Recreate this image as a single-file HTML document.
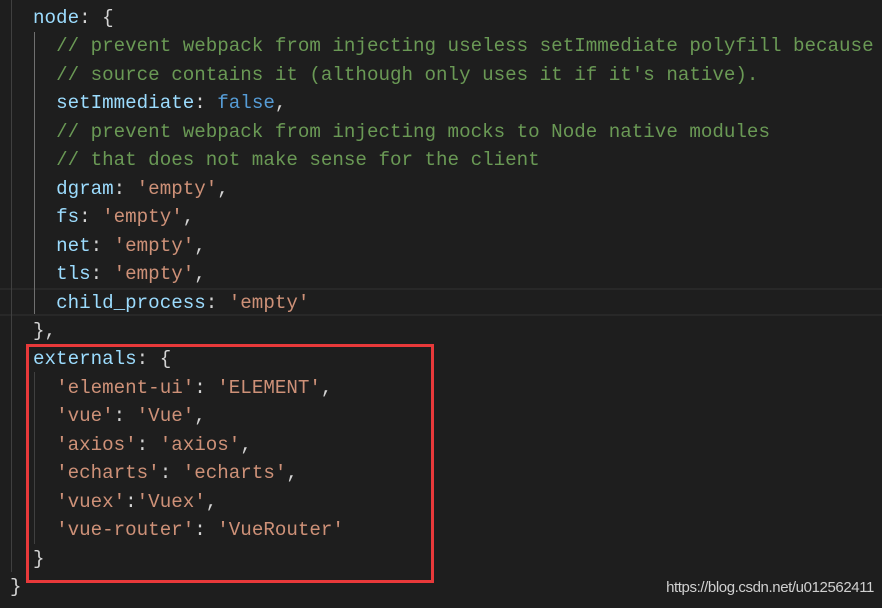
<!DOCTYPE html>
<html><head><style>
body{margin:0;background:#1e1e1e;width:882px;height:608px;overflow:hidden;position:relative}
pre{margin:0;position:absolute;left:10px;top:4px;font-family:"Liberation Mono",monospace;font-size:19.2px;line-height:28.45px;color:#d4d4d4}
.k{color:#9cdcfe}.c{color:#6a9955}.s{color:#ce9178}.b{color:#569cd6}
.g{position:absolute;width:1px;background:#404040}
</style></head><body>
<div style="position:absolute;left:0;top:288px;width:882px;height:28px;border-top:2px solid #282828;border-bottom:2px solid #282828;box-sizing:border-box"></div>
<div class="g" style="left:11px;top:0;height:572px"></div>
<div class="g" style="left:34px;top:32px;height:282px;background:#707070"></div>
<div class="g" style="left:34px;top:372px;height:172px"></div>
<pre>  <span class="k">node</span>: {
    <span class="c">// prevent webpack from injecting useless setImmediate polyfill because</span>
    <span class="c">// source contains it (although only uses it if it's native).</span>
    <span class="k">setImmediate</span>: <span class="b">false</span>,
    <span class="c">// prevent webpack from injecting mocks to Node native modules</span>
    <span class="c">// that does not make sense for the client</span>
    <span class="k">dgram</span>: <span class="s">'empty'</span>,
    <span class="k">fs</span>: <span class="s">'empty'</span>,
    <span class="k">net</span>: <span class="s">'empty'</span>,
    <span class="k">tls</span>: <span class="s">'empty'</span>,
    <span class="k">child_process</span>: <span class="s">'empty'</span>
  },
  <span class="k">externals</span>: {
    <span class="s">'element-ui'</span>: <span class="s">'ELEMENT'</span>,
    <span class="s">'vue'</span>: <span class="s">'Vue'</span>,
    <span class="s">'axios'</span>: <span class="s">'axios'</span>,
    <span class="s">'echarts'</span>: <span class="s">'echarts'</span>,
    <span class="s">'vuex'</span>:<span class="s">'Vuex'</span>,
    <span class="s">'vue-router'</span>: <span class="s">'VueRouter'</span>
  }
}</pre>
<div style="position:absolute;left:26px;top:344px;width:408px;height:239px;border:3px solid #e8393a;box-sizing:border-box"></div>
<div style="position:absolute;right:8px;top:579px;font-family:'Liberation Sans',sans-serif;font-size:15px;color:#d0d0d0;letter-spacing:-0.4px">https://blog.csdn.net/u012562411</div>
</body></html>
